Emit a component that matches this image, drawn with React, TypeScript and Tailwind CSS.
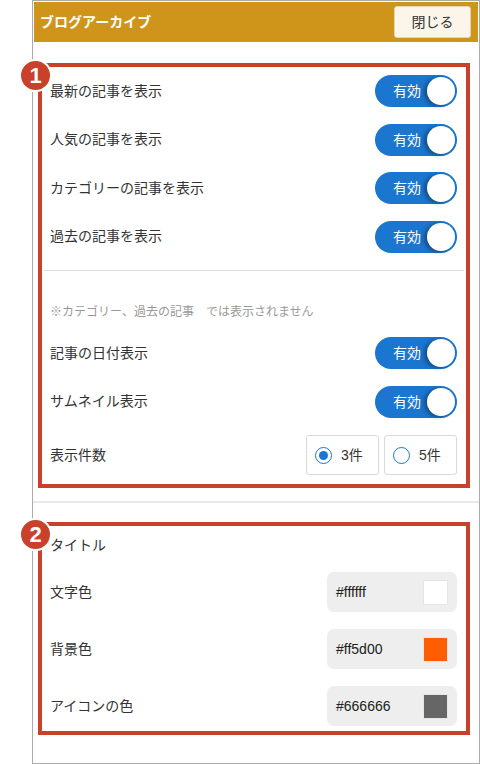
type Color = { label: string; value: string; swatch: string };

const font = { fontFamily: '"Liberation Sans", "Noto Sans CJK JP", sans-serif' };

const toggles1 = ["最新の記事を表示", "人気の記事を表示", "カテゴリーの記事を表示", "過去の記事を表示"];
const toggles2 = ["記事の日付表示", "サムネイル表示"];

const colors: Color[] = [
  { label: "文字色", value: "#ffffff", swatch: "bg-[#ffffff]" },
  { label: "背景色", value: "#ff5d00", swatch: "bg-[#ff5d00]" },
  { label: "アイコンの色", value: "#666666", swatch: "bg-[#666666]" },
];

function Toggle() {
  return (
    <div className="flex h-[32px] w-[82px] items-center justify-between rounded-full bg-[#1b76cf] pl-[18px] pr-[2px]">
      <span className="text-[14px] leading-none text-white">有効</span>
      <span className="h-[28px] w-[28px] rounded-full bg-white shadow-[-3px_1px_4px_rgba(0,0,0,0.35)]" />
    </div>
  );
}

function ToggleRow({ label }: { label: string }) {
  return (
    <div className="flex h-[48.5px] items-center justify-between pl-[8px] pr-[9px]">
      <span className="text-[14px] text-[#333]">{label}</span>
      <Toggle />
    </div>
  );
}

function Badge({ n }: { n: string }) {
  return (
    <div className="absolute left-[-23px] top-[-8px] flex h-[33px] w-[33px] items-center justify-center rounded-full border-2 border-white bg-[#c9412b] text-[22px] font-bold leading-none text-white">
      {n}
    </div>
  );
}

function Radio({ label, checked }: { label: string; checked?: boolean }) {
  return (
    <div className="flex h-[40px] w-[73px] items-center gap-[9px] rounded-[3px] border border-[#d9d9d9] bg-white pl-[8px]">
      <span className="flex h-[17px] w-[17px] items-center justify-center rounded-full border-[1.5px] border-[#1b76cf] bg-white">
        {checked && <span className="h-[9px] w-[9px] rounded-full bg-[#1b76cf]" />}
      </span>
      <span className="text-[14px] text-[#333]">{label}</span>
    </div>
  );
}

export default function App() {
  return (
    <div className="h-[764px] w-[480px] bg-white" style={font}>
      <div className="ml-[32px] h-[764px] w-[448px] border border-[#ababab] bg-white">
        <div className="mx-px mt-px flex h-[40px] items-center justify-between bg-[#cf951b] pl-[6px] pr-[7px]">
          <span className="text-[14px] font-bold text-white">ブログアーカイブ</span>
          <button className="h-[32px] w-[77px] rounded-[3px] border border-[#e3d4b8] bg-[#fcf6ea] text-[14px] text-[#333]">
            閉じる
          </button>
        </div>

        <div className="relative ml-[5px] mt-[21px] w-[432px] border-4 border-[#c9412b]">
          <Badge n="1" />
          {toggles1.map((t) => (
            <ToggleRow key={t} label={t} />
          ))}
          <div className="mx-[2px] mt-[9px] h-px bg-[#dddddd]" />
          <p className="mt-[32px] pl-[8px] text-[12px] leading-[18px] text-[#999]">
            ※カテゴリー、過去の記事　では表示されません
          </p>
          <div className="mt-[8px]">
            {toggles2.map((t) => (
              <ToggleRow key={t} label={t} />
            ))}
          </div>
          <div className="flex h-[58px] items-center justify-between pl-[8px] pr-[9px]">
            <span className="text-[14px] text-[#333]">表示件数</span>
            <div className="flex gap-[5px]">
              <Radio label="3件" checked />
              <Radio label="5件" />
            </div>
          </div>
        </div>

        <div className="mt-[13px] h-[2px] bg-[#e8e8e8]" />

        <div className="relative ml-[5px] mt-[19px] w-[432px] border-4 border-[#c9412b] pb-[5px]">
          <Badge n="2" />
          <div className="flex h-[38px] items-center pl-[8px] text-[14px] text-[#333]">タイトル</div>
          <div className="mt-[8px] flex flex-col gap-[17px]">
            {colors.map((c) => (
              <div key={c.label} className="flex items-center justify-between pl-[8px] pr-[9px]">
                <span className="text-[14px] text-[#333]">{c.label}</span>
                <div className="flex h-[40px] w-[130px] items-center justify-between rounded-[7px] bg-[#eeeeee] pl-[9px] pr-[9px]">
                  <span className="text-[14px] text-[#222]">{c.value}</span>
                  <span className={`h-[25px] w-[25px] border border-[#e6e6e6] ${c.swatch}`} />
                </div>
              </div>
            ))}
          </div>
        </div>
      </div>
    </div>
  );
}
